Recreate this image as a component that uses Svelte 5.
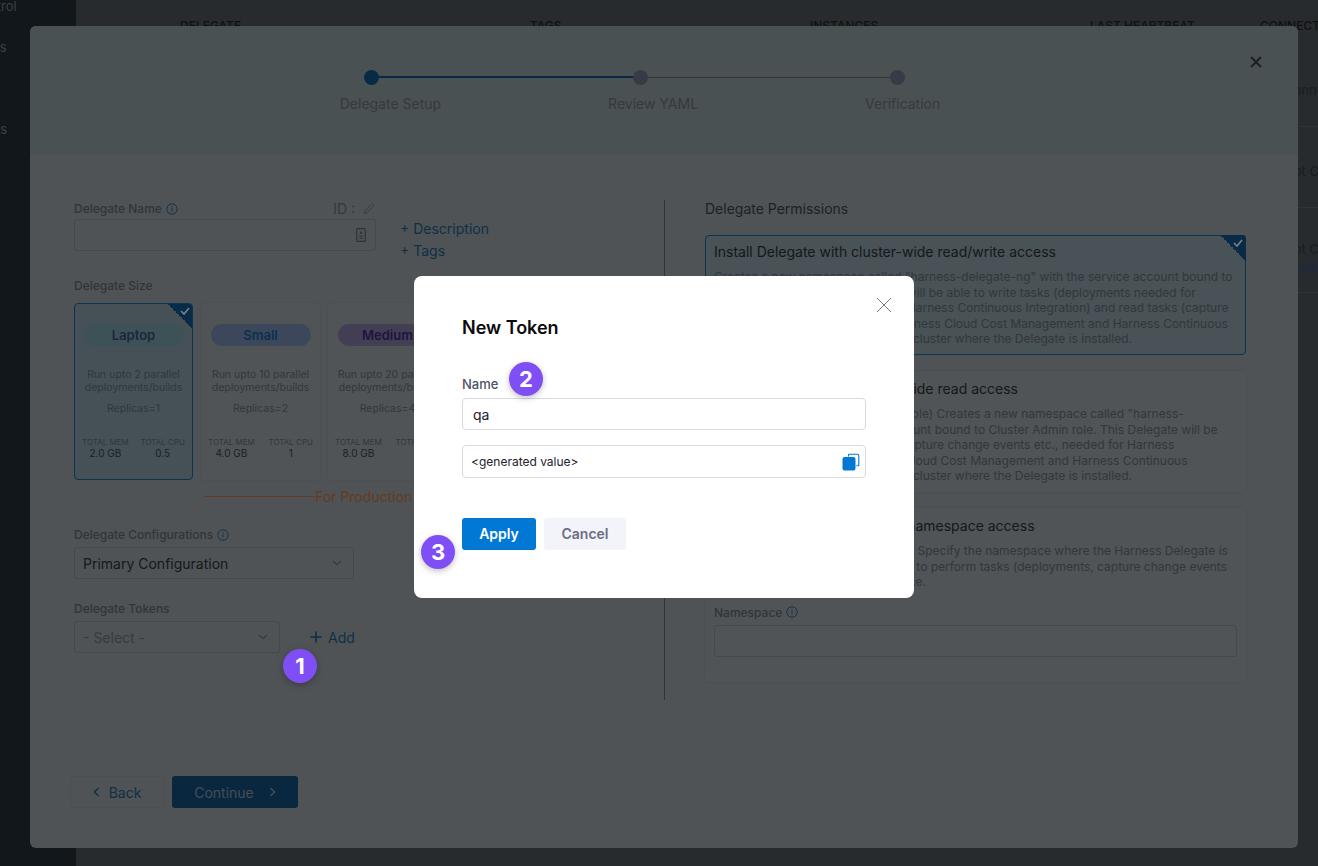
<script>
    const navItems = ["Access Control", "Environments", "", "Subscriptions"];
    const columns = ["DELEGATE", "TAGS", "INSTANCES", "LAST HEARTBEAT", "CONNECTIVITY"];
    const rows = [
        { status: "Connected", sub: "" },
        { status: "Not Connected", sub: "" },
        { status: "Not Connected", sub: "Troubleshoot" }
    ];
    const steps = ["Delegate Setup", "Review YAML", "Verification"];
    const sizes = [
        { name: "Laptop", cls: "laptop", runs: 2, replicas: 1, mem: "2.0 GB", cpu: "0.5", selected: true },
        { name: "Small", cls: "small", runs: 10, replicas: 2, mem: "4.0 GB", cpu: "1", selected: false },
        { name: "Medium", cls: "medium", runs: 20, replicas: 4, mem: "8.0 GB", cpu: "2", selected: false }
    ];
    const permissions = [
        {
            title: "Install Delegate with cluster-wide read/write access",
            text: 'Creates a new namespace called "harness-delegate-ng" with the service account bound to\nCluster Admin role. This Delegate will be able to write tasks (deployments needed for\nHarness Continuous Delivery and Harness Continuous Integration) and read tasks (capture\nchange events etc., needed for Harness Cloud Cost Management and Harness Continuous\nVerification capabilities etc.) in the cluster where the Delegate is installed.',
            selected: true
        },
        {
            title: "Install Delegate with cluster-wide read access",
            text: '(Requires readonly Cluster Admin role) Creates a new namespace called "harness-\ndelegate-ng" with the service account bound to Cluster Admin role. This Delegate will be\nable to perform read-only tasks (capture change events etc., needed for Harness\nContinuous Verification, Harness Cloud Cost Management and Harness Continuous\nVerification capabilities etc.) in the cluster where the Delegate is installed.',
            selected: false
        }
    ];
</script>

{#snippet info()}
    <svg class="info" viewBox="0 0 12 12" width="12" height="12" fill="none" stroke="currentColor">
        <circle cx="6" cy="6" r="5.2" stroke-width="0.9" />
        <path d="M6 5.2v3.2M6 3.2v1" stroke-width="1" />
    </svg>
{/snippet}

{#snippet chevron()}
    <svg class="chevron" viewBox="0 0 10 6" width="10" height="6" fill="none" stroke="currentColor" stroke-width="1.2">
        <path d="M1 1l4 3.6L9 1" />
    </svg>
{/snippet}

{#snippet corner()}
    <span class="corner">
        <svg viewBox="0 0 10 8" width="10" height="8" fill="none" stroke="#fff" stroke-width="1.6">
            <path d="M1 4l3 3 5-6" />
        </svg>
    </span>
{/snippet}

<div class="page">
    <aside class="sidebar">
        {#each navItems as item}
            <div class="nav-item">{item}</div>
        {/each}
    </aside>
    <main class="table">
        <div class="table-head">
            {#each columns as col}
                <span>{col}</span>
            {/each}
        </div>
        {#each rows as row}
            <div class="table-row">
                <div class="status">
                    {row.status}
                    {#if row.sub}<small>{row.sub}</small>{/if}
                </div>
            </div>
        {/each}
    </main>
</div>

<section class="wizard">
    <header class="wizard-head">
        <div class="stepper">
            <div class="track">
                <span class="dot active"></span>
                <span class="line active"></span>
                <span class="dot"></span>
                <span class="line"></span>
                <span class="dot"></span>
            </div>
            <div class="step-labels">
                {#each steps as step}
                    <span>{step}</span>
                {/each}
            </div>
        </div>
        <svg class="wizard-close" viewBox="0 0 12 12" width="12" height="12" fill="none" stroke="currentColor" stroke-width="2">
            <path d="M1 1l10 10M11 1L1 11" />
        </svg>
    </header>

    <div class="wizard-body">
        <div class="left">
            <div class="name-row">
                <div class="name-field">
                    <div class="name-labels">
                        <span class="label">Delegate Name {@render info()}</span>
                        <span class="id">
                            ID :
                            <svg viewBox="0 0 14 14" width="14" height="14" fill="none" stroke="currentColor" stroke-width="0.9">
                                <path d="M2.5 11.5l.6-2.8 6.3-6.3a1.2 1.2 0 0 1 1.8 0l.1.1a1.2 1.2 0 0 1 0 1.8L5 10.6z" />
                            </svg>
                        </span>
                    </div>
                    <div class="input name-input">
                        <svg viewBox="0 0 10 14" width="10" height="14">
                            <rect x="0.7" y="0.7" width="8.6" height="12.6" rx="1" fill="none" stroke="currentColor" stroke-width="1.2" />
                            <path d="M5 2.8l1.6 3H3.4zM3.2 7.4h3.6v1.2H3.2zM3.2 9.6h3.6v1.2H3.2z" fill="currentColor" />
                        </svg>
                    </div>
                </div>
                <div class="name-links">
                    <span>+ Description</span>
                    <span>+ Tags</span>
                </div>
            </div>

            <div class="label size-label">Delegate Size</div>
            <div class="sizes">
                {#each sizes as size}
                    <div class="size-card" class:selected={size.selected}>
                        {#if size.selected}{@render corner()}{/if}
                        <div class="pill {size.cls}">{size.name}</div>
                        <p class="runs">Run upto {size.runs} parallel deployments/builds</p>
                        <p class="replicas">Replicas={size.replicas}</p>
                        <div class="totals">
                            <div><span>TOTAL MEM</span><b>{size.mem}</b></div>
                            <div><span>TOTAL CPU</span><b>{size.cpu}</b></div>
                        </div>
                    </div>
                {/each}
            </div>
            <div class="production"><span class="rule"></span>For Production</div>

            <div class="label config-label">Delegate Configurations {@render info()}</div>
            <div class="input select config-select">Primary Configuration {@render chevron()}</div>

            <div class="label tokens-label">Delegate Tokens</div>
            <div class="tokens-row">
                <div class="input select tokens-select">- Select - {@render chevron()}</div>
                <span class="add">
                    <svg viewBox="0 0 12 12" width="12" height="12" fill="none" stroke="currentColor" stroke-width="1.6">
                        <path d="M6 .5v11M.5 6h11" />
                    </svg>
                    Add
                </span>
            </div>

            <div class="actions">
                <button class="back" type="button">
                    <svg viewBox="0 0 7 10" width="7" height="10" fill="none" stroke="currentColor" stroke-width="1.5">
                        <path d="M5.5 1L1.5 5l4 4" />
                    </svg>
                    Back
                </button>
                <button class="continue" type="button">
                    Continue
                    <svg viewBox="0 0 7 10" width="7" height="10" fill="none" stroke="currentColor" stroke-width="1.5">
                        <path d="M1.5 1l4 4-4 4" />
                    </svg>
                </button>
            </div>
        </div>

        <div class="right">
            <div class="perm-heading">Delegate Permissions</div>
            {#each permissions as perm}
                <div class="perm-card" class:selected={perm.selected}>
                    {#if perm.selected}{@render corner()}{/if}
                    <h4>{perm.title}</h4>
                    <p>{perm.text}</p>
                </div>
            {/each}
            <div class="perm-card namespace">
                <h4>Install Delegate with specific namespace access</h4>
                <p>{"(Requires a namespace admin role) Specify the namespace where the Harness Delegate is\ninstalled. This Delegate will be able to perform tasks (deployments, capture change events\netc.) within the specified namespace."}</p>
                <div class="label ns-label">Namespace {@render info()}</div>
                <div class="input ns-input"></div>
            </div>
        </div>
    </div>
</section>

<div class="backdrop"></div>

<div class="dialog">
    <svg class="dialog-close" viewBox="0 0 16 16" width="16" height="16" fill="none" stroke="currentColor" stroke-width="1">
        <path d="M1 1l14 14M15 1L1 15" />
    </svg>
    <h3>New Token</h3>
    <div class="dialog-label">Name</div>
    <div class="dialog-input name">qa</div>
    <div class="dialog-input value">
        &lt;generated value&gt;
        <svg viewBox="0 0 18 18" width="18" height="18">
            <path d="M6.5 1.2h9a1.3 1.3 0 0 1 1.3 1.3v10.6" fill="none" stroke="#0278d5" stroke-width="1.1" />
            <path d="M6.5 1.2v2.4M14.4 12.8h2.4" fill="none" stroke="#0278d5" stroke-width="1.1" />
            <rect x="0.5" y="4" width="13" height="13.5" rx="2" fill="#0278d5" />
        </svg>
    </div>
    <div class="dialog-actions">
        <button class="apply" type="button">Apply</button>
        <button class="cancel" type="button">Cancel</button>
    </div>
</div>

<span class="badge one">1</span>
<span class="badge two">2</span>
<span class="badge three">3</span>

<style>
    :global(body) {
        margin: 0;
        font-family: Inter, "Liberation Sans", sans-serif;
        overflow: hidden;
    }

    .page {
        display: flex;
        height: 866px;
        width: 1318px;
        overflow: hidden;
        background: #4e565c;
    }

    .sidebar {
        width: 76px;
        flex: none;
        background: #222e36;
        color: #748090;
        font-size: 13px;
        overflow: hidden;
    }

    .nav-item {
        height: 41px;
        line-height: 13px;
        white-space: nowrap;
        margin-left: -77px;
    }

    .table {
        flex: 1;
        overflow: hidden;
    }

    .table-head {
        display: grid;
        grid-template-columns: 350px 280px 280px 170px 100px;
        padding: 18px 0 0 104px;
        height: 28px;
        font-size: 12px;
        font-weight: 500;
        color: #222;
        white-space: nowrap;
    }

    .table-row {
        height: 81px;
        border-bottom: 1px solid #5e666c;
        box-sizing: border-box;
        padding: 7px 0 0 1208px;
        display: flex;
        align-items: center;
        white-space: nowrap;
        font-size: 13px;
        color: #343a40;
    }

    .table-row:last-child {
        height: 85px;
        padding-top: 14px;
    }

    .status small {
        display: block;
        margin-top: 3px;
        font-size: 11px;
        color: #34508c;
    }

    .wizard {
        position: absolute;
        left: 30px;
        top: 26px;
        width: 1268px;
        height: 822px;
        border-radius: 6px;
        overflow: hidden;
        background: #9ea6aa;
        display: flex;
        flex-direction: column;
    }

    .wizard-head {
        height: 129px;
        flex: none;
        background: #94a2a6;
        position: relative;
        box-sizing: border-box;
        padding-top: 43px;
    }

    .stepper {
        display: flex;
        flex-direction: column;
        align-items: center;
        padding-right: 48px;
    }

    .track {
        display: flex;
        align-items: center;
        margin-right: 12px;
        height: 16px;
    }

    .dot {
        width: 15px;
        height: 15px;
        border-radius: 50%;
        background: #70748a;
    }

    .dot.active {
        background: #0e568c;
    }

    .line {
        height: 1px;
        width: 242px;
        background: #646a70;
    }

    .line.active {
        height: 2px;
        width: 254px;
        background: #0e568c;
    }

    .step-labels {
        display: flex;
        gap: 167px;
        margin-top: 10px;
        font-size: 14px;
        line-height: 17px;
        color: #6a7280;
    }

    .wizard-close {
        position: absolute;
        top: 30px;
        left: 1220px;
        color: #384048;
    }

    .wizard-body {
        flex: 1;
        display: flex;
        padding: 45px 0 0 44px;
    }

    .left {
        width: 591px;
        height: 500px;
        box-sizing: border-box;
        border-right: 1px solid #646a70;
        position: relative;
    }

    .label {
        font-size: 12px;
        line-height: 15px;
        font-weight: 500;
        color: #626a74;
        display: flex;
        align-items: center;
        gap: 4px;
    }

    .info {
        color: #1a6090;
    }

    .name-row {
        display: flex;
        gap: 24px;
    }

    .name-field {
        width: 302px;
    }

    .name-labels {
        display: flex;
        justify-content: space-between;
        align-items: center;
        height: 21px;
        margin-top: -2px;
    }

    .id {
        display: flex;
        align-items: center;
        gap: 7px;
        font-size: 14px;
        color: #6a7280;
    }

    .input {
        box-sizing: border-box;
        border: 1px solid #8a9297;
        border-radius: 3px;
    }

    .name-input {
        height: 32px;
        display: flex;
        align-items: center;
        justify-content: flex-end;
        padding-right: 9px;
        color: #5c646c;
    }

    .name-links {
        display: flex;
        flex-direction: column;
        gap: 5px;
        margin-top: 20px;
        font-size: 14px;
        line-height: 17px;
        color: #1a6090;
    }

    .size-label {
        margin-top: 19px;
    }

    .sizes {
        display: flex;
        gap: 8px;
        margin-top: 10px;
        width: 373px;
    }

    .size-card {
        position: relative;
        width: 119px;
        height: 177px;
        flex: none;
        box-sizing: border-box;
        border-radius: 4px;
        background: #a0a8ac;
        box-shadow: 0 0 3px rgba(0, 0, 0, 0.08);
        padding: 21px 0 0;
        text-align: center;
        color: #666e78;
        overflow: hidden;
    }

    .size-card.selected {
        border: 1px solid #126aa8;
        background: #8aa2ac;
        padding: 20px 0 0;
        box-shadow: none;
    }

    .corner {
        position: absolute;
        top: -1px;
        right: -1px;
        width: 26px;
        height: 26px;
        background: linear-gradient(to top right, transparent 50%, #105890 50%);
        border-top-right-radius: 3px;
    }

    .corner svg {
        position: absolute;
        top: 4px;
        right: 3px;
    }

    .pill {
        width: 100px;
        height: 22px;
        margin: 0 auto;
        border-radius: 11px;
        font-size: 13px;
        line-height: 22px;
        font-weight: 600;
    }

    .pill.laptop {
        background: #7aa4ac;
        color: #3a4a80;
    }

    .pill.small {
        background: #7a8fb8;
        color: #16609e;
    }

    .pill.medium {
        background: #857ea8;
        color: #3a2a80;
    }

    .runs {
        margin: 22px 6px 0;
        font-size: 10.5px;
        line-height: 13px;
    }

    .replicas {
        margin: 8px 0 0;
        font-size: 10.5px;
        line-height: 13px;
    }

    .totals {
        display: flex;
        justify-content: space-between;
        margin-top: 22px;
        padding: 0 7px;
    }

    .totals span {
        display: block;
        font-size: 8px;
        line-height: 10px;
        white-space: nowrap;
    }

    .totals b {
        display: block;
        font-size: 10px;
        line-height: 13px;
        font-weight: 400;
        color: #384048;
    }

    .production {
        display: flex;
        align-items: center;
        margin: 8px 0 0 130px;
        font-size: 14px;
        line-height: 17px;
        color: #c8763c;
    }

    .rule {
        width: 111px;
        height: 1px;
        background: #c8763c;
    }

    .config-label {
        margin-top: 22px;
    }

    .select {
        display: flex;
        align-items: center;
        justify-content: space-between;
        box-sizing: border-box;
        padding: 0 11px 0 8px;
        font-size: 14px;
        color: #2a3238;
    }

    .chevron {
        color: #6a7280;
    }

    .config-select {
        width: 280px;
        height: 32px;
        margin-top: 5px;
    }

    .tokens-label {
        margin-top: 22px;
    }

    .tokens-row {
        display: flex;
        align-items: center;
        margin-top: 5px;
    }

    .tokens-select {
        width: 206px;
        height: 32px;
        color: #6e7680;
    }

    .add {
        display: flex;
        align-items: center;
        gap: 6px;
        margin-left: 30px;
        font-size: 14px;
        color: #1a6090;
    }

    .actions {
        position: absolute;
        left: -4px;
        top: 576px;
        display: flex;
        gap: 8px;
    }

    .actions button {
        height: 32px;
        box-sizing: border-box;
        border-radius: 3px;
        font-family: inherit;
        font-size: 14px;
        display: flex;
        align-items: center;
        justify-content: center;
    }

    .back {
        width: 94px;
        gap: 9px;
        background: transparent;
        border: 1px solid #989fa4;
        color: #1a6090;
    }

    .continue {
        width: 126px;
        gap: 15px;
        background: #125080;
        border: 0;
        color: #8a9aaa;
    }

    .right {
        width: 541px;
        margin-left: 40px;
    }

    .perm-heading {
        font-size: 14px;
        line-height: 18px;
        font-weight: 400;
        color: #3a4248;
    }

    .perm-card {
        position: relative;
        box-sizing: border-box;
        height: 121px;
        margin-top: 16px;
        padding: 9px 9px 0;
        border-radius: 4px;
        background: #a0a8ac;
        box-shadow: 0 0 3px rgba(0, 0, 0, 0.08);
        white-space: pre-line;
    }

    .perm-card.selected {
        height: 120px;
        margin-top: 17px;
        border: 1px solid #126aa8;
        background: #92a4ac;
        box-shadow: none;
        padding: 7px 8px 0 8px;
    }

    .perm-card h4 {
        margin: 0;
        font-size: 14px;
        line-height: 17px;
        font-weight: 400;
        color: #2a3238;
    }

    .perm-card p {
        margin: 9px 0 0;
        font-size: 12px;
        line-height: 15.5px;
        color: #666e78;
    }

    .namespace {
        height: 174px;
        margin-top: 16px;
    }

    .ns-label {
        margin-top: 15px;
    }

    .ns-input {
        height: 32px;
        margin-top: 5px;
    }

    .backdrop {
        position: absolute;
        left: 0;
        top: 0;
        width: 1318px;
        height: 866px;
        background: rgba(0, 0, 0, 0.5);
    }

    .dialog {
        position: absolute;
        left: 414px;
        top: 276px;
        width: 500px;
        height: 322px;
        box-sizing: border-box;
        padding: 42px 48px 0;
        background: #fff;
        border-radius: 8px;
    }

    .dialog h3 {
        margin: 0;
        font-size: 18px;
        line-height: 20px;
        font-weight: 600;
        color: #0b0b0d;
    }

    .dialog-close {
        position: absolute;
        top: 21px;
        right: 22px;
        color: #77798d;
    }

    .dialog-label {
        margin-top: 36px;
        font-size: 13px;
        line-height: 20px;
        font-weight: 500;
        color: #4f5162;
    }

    .dialog-input {
        box-sizing: border-box;
        width: 404px;
        border: 1px solid #d9dae5;
        border-radius: 4px;
        display: flex;
        align-items: center;
        color: #22222a;
    }

    .dialog-input.name {
        height: 32px;
        margin-top: 4px;
        padding-left: 10px;
        font-size: 14px;
    }

    .dialog-input.value {
        height: 33px;
        margin-top: 15px;
        padding: 0 5px 0 8px;
        justify-content: space-between;
        font-size: 12px;
    }

    .dialog-actions {
        display: flex;
        gap: 8px;
        margin-top: 40px;
    }

    .dialog-actions button {
        height: 32px;
        padding: 0 0 2px;
        border: 0;
        border-radius: 3px;
        font-family: inherit;
        font-size: 14px;
        font-weight: 600;
    }

    .apply {
        width: 74px;
        background: #0278d5;
        color: #fff;
    }

    .cancel {
        width: 82px;
        background: #f3f3fa;
        color: #6b6d85;
    }

    .badge {
        position: absolute;
        width: 34px;
        height: 34px;
        border-radius: 50%;
        background: #7f4ff5;
        color: #fff;
        font-size: 22px;
        font-weight: 700;
        line-height: 34px;
        text-align: center;
        box-shadow: 0 2px 6px rgba(0, 0, 0, 0.25);
    }

    .badge.one {
        left: 283px;
        top: 649px;
    }

    .badge.two {
        left: 509px;
        top: 362px;
    }

    .badge.three {
        left: 421px;
        top: 535px;
    }
</style>
